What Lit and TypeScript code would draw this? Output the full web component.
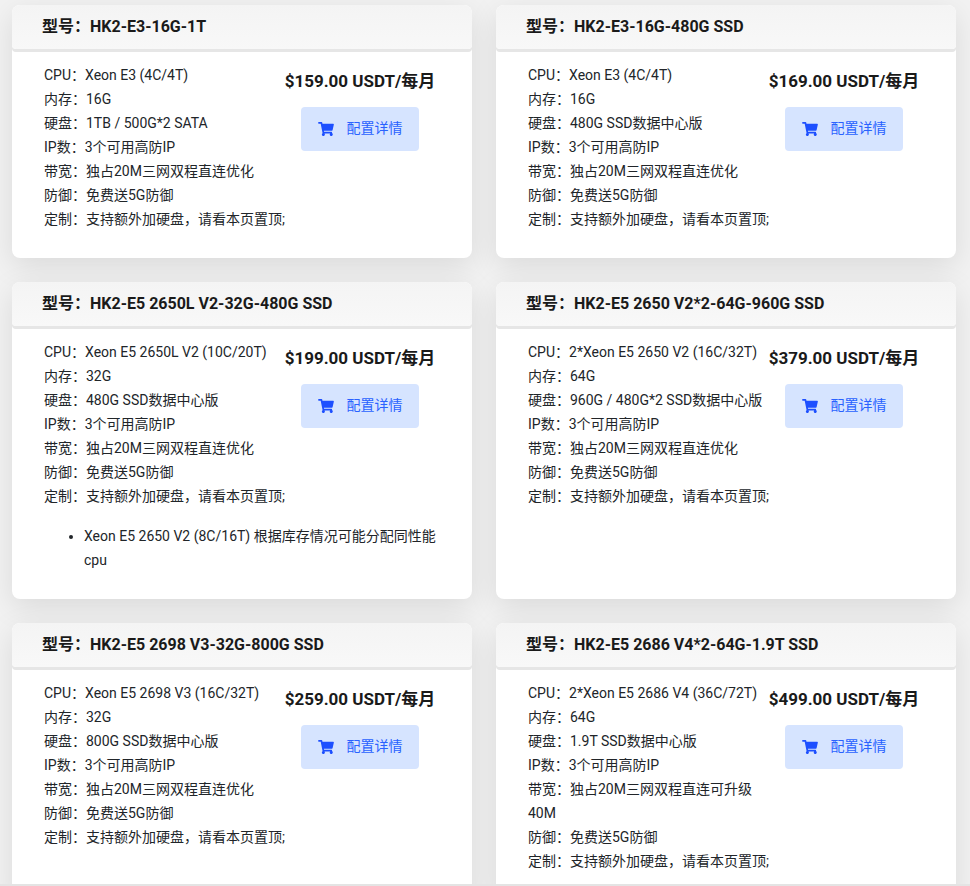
import { LitElement, html, css, svg } from "lit";
import { customElement } from "lit/decorators.js";

interface Plan { model: string; price: string; specs: string[]; note?: string }

const ip = "3个可用高防IP";
const line = "独占20M三网双程直连优化";
const def = "免费送5G防御";
const custom = "支持额外加硬盘，请看本页置顶;";
const plans: Plan[] = [
  { model: "HK2-E3-16G-1T", price: "$159.00", specs: ["Xeon E3 (4C/4T)", "16G", "1TB / 500G*2 SATA"] },
  { model: "HK2-E3-16G-480G SSD", price: "$169.00", specs: ["Xeon E3 (4C/4T)", "16G", "480G SSD数据中心版"] },
  { model: "HK2-E5 2650L V2-32G-480G SSD", price: "$199.00", specs: ["Xeon E5 2650L V2 (10C/20T)", "32G", "480G SSD数据中心版"], note: "Xeon E5 2650 V2 (8C/16T) 根据库存情况可能分配同性能cpu" },
  { model: "HK2-E5 2650 V2*2-64G-960G SSD", price: "$379.00", specs: ["2*Xeon E5 2650 V2 (16C/32T)", "64G", "960G / 480G*2 SSD数据中心版"] },
  { model: "HK2-E5 2698 V3-32G-800G SSD", price: "$259.00", specs: ["Xeon E5 2698 V3 (16C/32T)", "32G", "800G SSD数据中心版"] },
  { model: "HK2-E5 2686 V4*2-64G-1.9T SSD", price: "$499.00", specs: ["2*Xeon E5 2686 V4 (36C/72T)", "64G", "1.9T SSD数据中心版", "独占20M三网双程直连可升级40M"] },
];

const cart = svg`<path d="M528.12 301.319l47.273-208C578.806 78.301 567.391 64 551.99 64H159.208l-9.166-44.81C147.758 8.021 137.93 0 126.529 0H24C10.745 0 0 10.745 0 24v16c0 13.255 10.745 24 24 24h69.883l70.248 343.435C147.325 417.1 136 435.222 136 456c0 30.928 25.072 56 56 56s56-25.072 56-56c0-15.674-6.447-29.835-16.824-40h209.647C430.447 426.165 424 440.326 424 456c0 30.928 25.072 56 56 56s56-25.072 56-56c0-22.172-12.888-41.332-31.579-50.405l5.517-24.276c3.413-15.018-8.002-29.319-23.403-29.319H218.117l-6.545-32h293.145c11.206 0 20.92-7.754 23.403-18.681z"/>`;

@customElement("app-root")
export class AppRoot extends LitElement {
  static styles = css`
    :host {
      display: flex;
      flex-direction: column;
      height: 886px;
      overflow: hidden;
      background: #ececec;
      color: #212529;
      font-family: Roboto, "Noto Sans CJK SC", sans-serif;
      font-size: 14px;
      line-height: 24px;
    }
    .view { flex: 1; min-height: 0; overflow: hidden; background: #f2f2f2; }
    .edge { height: 2px; background: #e4e4e4; flex: none; }
    .grid {
      display: grid;
      grid-template-columns: 460px 460px;
      column-gap: 24px;
      row-gap: 24px;
      padding: 5px 14px 0 12px;
    }
    .card {
      background: #fff;
      border-radius: 8px;
      box-shadow: 0 8px 30px rgba(0, 0, 0, 0.1);
      padding-bottom: 27px;
    }
    .head {
      height: 44px;
      box-sizing: border-box;
      padding: 10px 30px 0;
      background: linear-gradient(#f4f4f4, #f8f8f8);
      border-radius: 8px 8px 4px 4px;
      box-shadow: 0 3px 0 #e6e6e6;
      font-size: 16px;
      font-weight: 700;
      color: #1a1a1a;
    }
    .body { padding: 14px 32px 0; }
    .top { display: flex; }
    .specs { width: 246px; flex: none; }
    .side {
      width: 176px;
      flex: none;
      margin-left: -18px;
      display: flex;
      flex-direction: column;
      align-items: center;
    }
    .price {
      margin-top: 6px;
      height: 24px;
      font-size: 17px;
      font-weight: 700;
      color: #1a1a1a;
      white-space: nowrap;
    }
    .btn {
      margin-top: 14px;
      width: 118px;
      height: 44px;
      display: flex;
      align-items: center;
      justify-content: center;
      gap: 13px;
      background: #d6e4ff;
      border-radius: 4px;
      color: #2962ff;
      font-size: 14px;
    }
    .btn span { margin-top: -2px; }
    .btn svg { width: 16px; height: 14px; fill: #1d4fff; flex: none; }
    ul { margin: 16px 0 0; padding: 0 0 0 40px; }
  `;

  render() {
    const labels = ["CPU", "内存", "硬盘"];
    return html`
      <div class="view">
        <div class="grid">
          ${plans.map((p) => html`
            <section class="card">
              <div class="head">型号：${p.model}</div>
              <div class="body">
                <div class="top">
                  <div class="specs">
                    ${labels.map((l, i) => html`<div>${l}：${p.specs[i]}</div>`)}
                    <div>IP数：${ip}</div>
                    <div>带宽：${p.specs[3] ?? line}</div>
                    <div>防御：${def}</div>
                    <div>定制：${custom}</div>
                  </div>
                  <div class="side">
                    <div class="price">${p.price} USDT/每月</div>
                    <div class="btn"><svg viewBox="0 0 576 512">${cart}</svg><span>配置详情</span></div>
                  </div>
                </div>
                ${p.note ? html`<ul><li>${p.note}</li></ul>` : ""}
              </div>
            </section>
          `)}
        </div>
      </div>
      <div class="edge"></div>
    `;
  }
}
